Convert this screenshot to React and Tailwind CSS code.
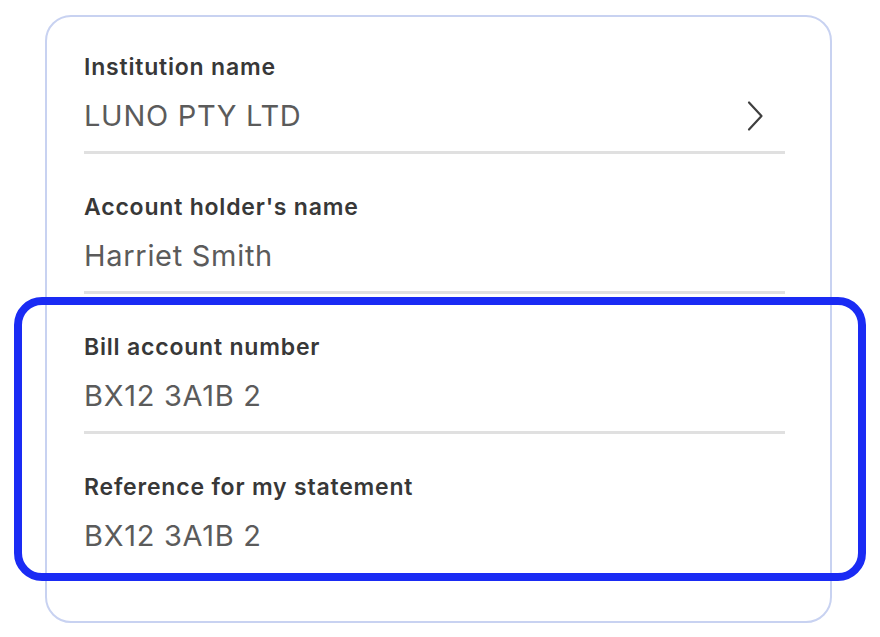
const fields = [
  { label: 'Institution name', value: 'LUNO PTY LTD', chevron: true },
  { label: "Account holder's name", value: 'Harriet Smith' },
  { label: 'Bill account number', value: 'BX12 3A1B 2' },
  { label: 'Reference for my statement', value: 'BX12 3A1B 2', last: true },
];

function Chevron() {
  return (
    <svg width="18" height="32" viewBox="0 0 18 32" fill="none" className="mr-[21px] text-[#3f3f3f]">
      <polyline
        points="3,2.5 15.5,16 3,29.5"
        stroke="currentColor"
        strokeWidth="2.2"
        strokeLinecap="round"
        strokeLinejoin="round"
      />
    </svg>
  );
}

export default function App() {
  return (
    <div
      className="min-h-screen w-[880px] bg-white pt-[15px] pl-[45px]"
      style={{ fontFamily: 'Inter, "Noto Sans", sans-serif' }}
    >
      <div className="relative w-[787px] h-[608px] rounded-[26px] border-2 border-[#c8d2f1] pt-[37px] pl-[37px] pr-[45px]">
        {fields.map((field) => (
          <div key={field.label} className={field.last ? '' : 'mb-[40px]'}>
            <div className="text-[23px] leading-[26px] font-semibold text-[#383838] tracking-[0.8px]">
              {field.label}
            </div>
            <div className="mt-[19px] flex items-center justify-between">
              <span className="text-[29px] leading-[34px] text-[#5b5b5b] tracking-[0.7px]">{field.value}</span>
              {field.chevron && <Chevron />}
            </div>
            {!field.last && <div className="mt-[18px] h-[3px] bg-[#e0e0e0]" />}
          </div>
        ))}

        <div className="absolute left-[-33px] top-[280px] w-[852px] h-[284px] rounded-[28px] border-[8px] border-[#1a2bf4] pointer-events-none" />
      </div>
    </div>
  );
}
